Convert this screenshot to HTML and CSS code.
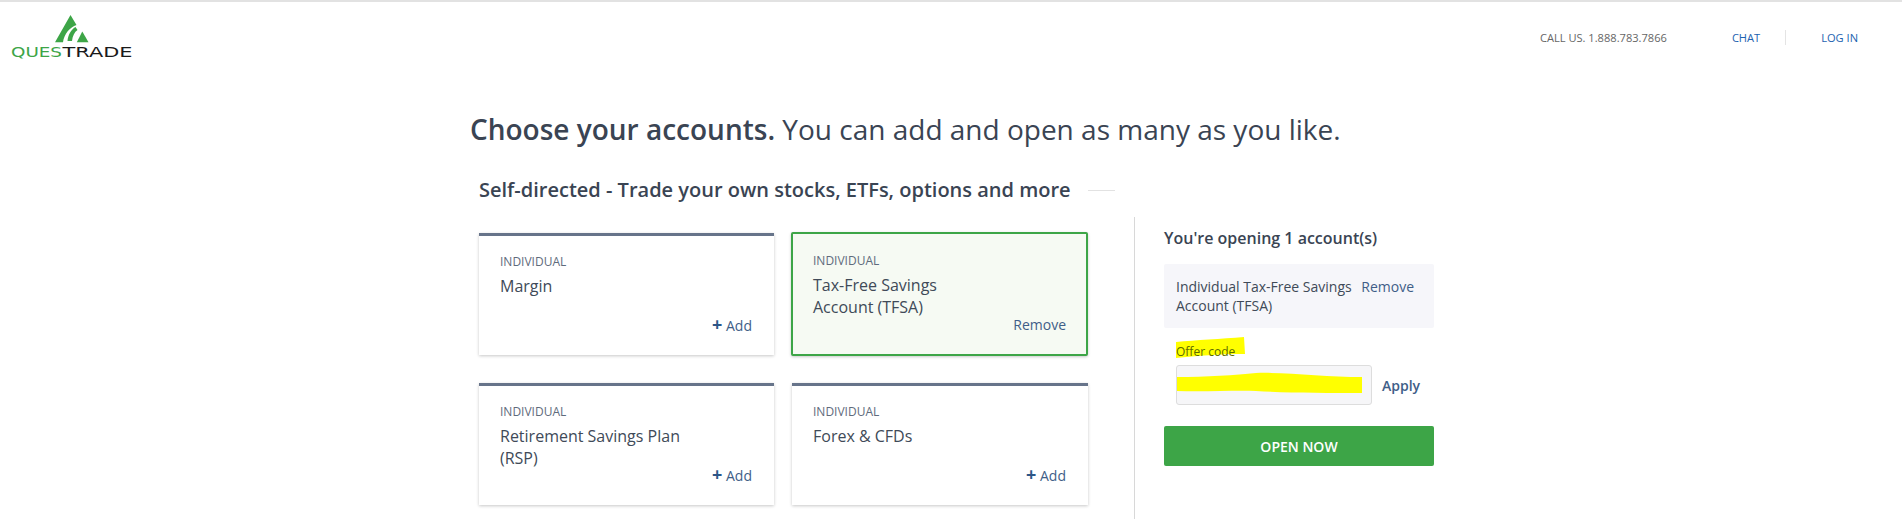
FILE: index.html
```html
<!DOCTYPE html>
<html lang="en">
<head>
    <meta charset="UTF-8">
    <title>Questrade - Choose your accounts</title>
    <link rel="stylesheet" href="styles.css">
</head>
<body>
    <header class="top-bar">
        <a class="logo" href="#">
            <svg width="126" height="50" viewBox="11 14 126 50">
                <path d="M55 42.3 L70.5 15 L76.5 25 C70 27 64 34 63 42.3 Z" fill="#3da547"/>
                <path d="M67.5 41 C68 35 71 29.5 75.5 27 L77.5 30 C74.5 32 72.5 36 72 41 Z" fill="#3da547"/>
                <path d="M82.3 31.5 L88.5 42.3 L76.8 42.3 Z" fill="#3da547"/>
                <text class="logo-text" x="11" y="57.3" textLength="51" lengthAdjust="spacingAndGlyphs" fill="#3da547">QUES</text>
                <text class="logo-text" x="62.5" y="57.3" textLength="70" lengthAdjust="spacingAndGlyphs" fill="#1a1a1a">TRADE</text>
            </svg>
        </a>
        <nav class="top-nav">
            <span class="call">CALL US. 1.888.783.7866</span>
            <a class="nav-link chat" href="#">CHAT</a>
            <a class="nav-link login" href="#">LOG IN</a>
        </nav>
    </header>

    <main class="page">
        <h1><strong>Choose your accounts.</strong> You can add and open as many as you like.</h1>
        <h2 class="section-title"><span>Self-directed - Trade your own stocks, ETFs, options and more</span></h2>
        <div class="columns">
            <section class="accounts">
                <div class="card-grid">
                    <div class="card">
                        <div class="card-type">INDIVIDUAL</div>
                        <div class="card-name">Margin</div>
                        <a class="card-action" href="#"><b>+</b> Add</a>
                    </div>
                    <div class="card selected">
                        <div class="card-type">INDIVIDUAL</div>
                        <div class="card-name">Tax-Free Savings<br>Account (TFSA)</div>
                        <a class="card-action" href="#">Remove</a>
                    </div>
                    <div class="card">
                        <div class="card-type">INDIVIDUAL</div>
                        <div class="card-name">Retirement Savings Plan<br>(RSP)</div>
                        <a class="card-action" href="#"><b>+</b> Add</a>
                    </div>
                    <div class="card">
                        <div class="card-type">INDIVIDUAL</div>
                        <div class="card-name">Forex &amp; CFDs</div>
                        <a class="card-action" href="#"><b>+</b> Add</a>
                    </div>
                </div>
            </section>
            <aside class="summary">
                <h3>You're opening 1 account(s)</h3>
                <div class="summary-item">
                    <span>Individual Tax-Free Savings Account (TFSA)</span>
                    <a href="#">Remove</a>
                </div>
                <div class="offer">
                    <label class="offer-label">
                        <svg class="marker" width="70" height="21" viewBox="0 0 70 21"><path d="M0 5 C20 3 45 2 68 0 L69 17 C45 17 20 19 0 21 Z" fill="#ffff00"/></svg>
                        <span class="offer-text">Offer code</span>
                    </label>
                    <div class="offer-row">
                        <div class="offer-input">
                            <svg class="marker" width="187" height="24" viewBox="0 0 187 24"><path d="M1 5 C30 5 60 3 80 1 C110 0 150 5 186 5 L186 21 C150 21 110 21 80 19 C60 18 30 20 1 19 Z" fill="#ffff00"/></svg>
                        </div>
                        <a class="apply" href="#">Apply</a>
                    </div>
                </div>
                <button class="open-now">OPEN NOW</button>
            </aside>
        </div>
    </main>
</body>
</html>
```

FILE: styles.css
```css
html, body {
    height: 519px;
    overflow: hidden;
}

body {
    margin: 0;
    background: #fff;
    color: #404a58;
    font-family: "Open Sans", sans-serif;
    border-top: 2px solid #e2e2e2;
    box-sizing: border-box;
}

a {
    text-decoration: none;
}

.top-bar {
    display: flex;
    justify-content: space-between;
    height: 68px;
    padding: 12px 0 0 11px;
    box-sizing: border-box;
}

.logo {
    display: block;
    height: 50px;
}

.logo-text {
    font-family: "DejaVu Sans", sans-serif;
    font-size: 14.5px;
}

.top-nav {
    display: flex;
    align-items: center;
    height: 34px;
    padding-top: 6px;
    font-size: 11.1px;
}

.call {
    color: #666;
    margin-right: 65px;
}

.nav-link {
    color: #1d62b0;
}

.chat {
    padding-right: 25px;
    border-right: 1px solid #e4e4e4;
    line-height: 15px;
}

.login {
    margin-left: 35px;
    margin-right: 44px;
}

.page {
    width: 964px;
    margin-left: 470px;
}

h1 {
    margin: 41px 0 0;
    color: #3a4453;
    font-size: 28px;
    line-height: 36px;
    font-weight: 400;
    white-space: nowrap;
}

h1 strong {
    font-weight: 600;
}

.section-title {
    display: flex;
    align-items: center;
    margin: 30px 0 0 9px;
    width: 636px;
    color: #3a4453;
    font-size: 20px;
    line-height: 26px;
    font-weight: 600;
    white-space: nowrap;
}

.section-title::after {
    content: "";
    flex: 1;
    height: 1px;
    background: #e2e2e2;
    margin-left: 17px;
}

.columns {
    display: flex;
    margin-top: 14px;
}

.accounts {
    width: 665px;
    padding: 16px 0 0 9px;
    box-sizing: border-box;
}

.card-grid {
    display: grid;
    grid-template-columns: 295px 296px;
    grid-auto-rows: 122px;
    gap: 28px 18px;
}

.card {
    position: relative;
    background: #fff;
    border-top: 3px solid #67748a;
    box-shadow: 0 1px 3px rgba(0, 0, 0, 0.22);
    padding: 18px 21px 0;
    box-sizing: border-box;
}

.card.selected {
    border: 2px solid #3da547;
    border-radius: 2px;
    background: #f6faf3;
    padding: 19px 20px 0;
    margin: -1px 0 -1px -1px;
    height: 124px;
}

.card-type {
    font-size: 12px;
    line-height: 16px;
    color: #5f6b7c;
}

.card-name {
    margin-top: 5px;
    font-size: 16px;
    line-height: 22px;
}

.card-action {
    position: absolute;
    right: 22px;
    bottom: 20px;
    font-size: 14px;
    line-height: 18px;
    color: #3f5e88;
}

.selected .card-action {
    right: 20px;
    bottom: 20px;
}

.card-action b {
    color: #2c5687;
    font-size: 18px;
    line-height: 14px;
}

.summary {
    flex: 1;
    border-left: 1px solid #d8d8d8;
    padding: 10px 0 0 29px;
    height: 302px;
    box-sizing: border-box;
}

.summary h3 {
    margin: 0;
    color: #3a4453;
    font-size: 16px;
    line-height: 22px;
    font-weight: 600;
}

.summary-item {
    display: flex;
    gap: 8px;
    justify-content: space-between;
    margin-top: 15px;
    width: 270px;
    height: 64px;
    padding: 13px 20px 0 12px;
    box-sizing: border-box;
    background: #f6f6fa;
    font-size: 14px;
    line-height: 19px;
    border-radius: 2px;
}

.summary-item a {
    color: #3f5e88;
}

.offer {
    padding-left: 12px;
}

.offer-label {
    display: block;
    position: relative;
    margin-top: 14px;
    height: 19px;
    font-size: 12px;
    line-height: 19px;
    color: #5d6b00;
}

.offer-text {
    position: relative;
}

.marker {
    position: absolute;
    left: 0;
    top: 0;
}

.offer-label .marker {
    top: -5px;
}

.offer-row {
    display: flex;
    align-items: center;
    margin-top: 4px;
}

.offer-input {
    position: relative;
    width: 196px;
    height: 40px;
    border: 1px solid #ddd;
    border-radius: 3px;
    background: #f6f6f8;
    box-sizing: border-box;
}

.offer-input .marker {
    left: -1px;
    top: 6px;
}

.apply {
    margin-left: 10px;
    font-size: 14px;
    font-weight: 600;
    color: #3f5e88;
}

.open-now {
    display: block;
    margin-top: 21px;
    width: 270px;
    height: 40px;
    border: none;
    border-radius: 2px;
    background: #3da547;
    color: #fff;
    font-family: inherit;
    font-size: 14px;
    font-weight: 600;
}
```
